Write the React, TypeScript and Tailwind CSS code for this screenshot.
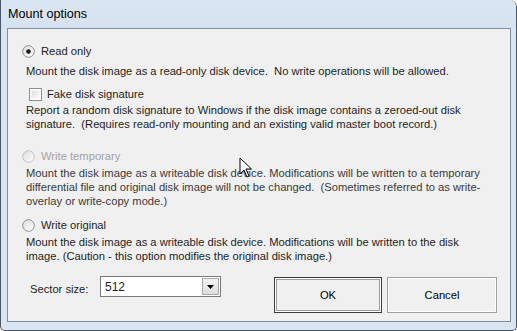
import React from 'react';

function Radio({ checked, disabled }: { checked?: boolean; disabled?: boolean }) {
  return (
    <svg width="13" height="13" viewBox="0 0 13 13" className="shrink-0">
      <defs>
        <linearGradient id="rg" x1="0" y1="0" x2="1" y2="1">
          <stop offset="0" stopColor="#dcdcdc" />
          <stop offset="1" stopColor="#ffffff" />
        </linearGradient>
      </defs>
      <circle cx="6.5" cy="6.5" r="5.8" fill="url(#rg)" stroke={disabled ? '#c4c4c4' : '#8e8f8f'} strokeWidth="1" />
      {checked && <circle cx="6.5" cy="6.5" r="2.3" fill="#1a1a1a" />}
    </svg>
  );
}

function Checkbox() {
  return (
    <svg width="13" height="13" viewBox="0 0 13 13" className="shrink-0">
      <defs>
        <linearGradient id="cg" x1="0" y1="0" x2="1" y2="1">
          <stop offset="0" stopColor="#dedede" />
          <stop offset="1" stopColor="#fbfbfb" />
        </linearGradient>
      </defs>
      <rect x="0.5" y="0.5" width="12" height="12" fill="#ffffff" stroke="#8e8f8f" />
      <rect x="2.5" y="2.5" width="8" height="8" fill="url(#cg)" />
    </svg>
  );
}

export default function App() {
  return (
    <div
      className="relative w-[517px] h-[331px] overflow-hidden bg-[#dae5f2] border-x border-b border-[#4a5566] rounded-tr-[7px] rounded-b-[5px] text-[11.2px] text-[#1e1e1e] whitespace-nowrap"
      style={{ fontFamily: '"Liberation Sans", Arial, sans-serif' }}
    >
      {/* Title bar */}
      <div className="h-[28px] pl-[7px] pt-[7px] text-[12.6px] leading-[15px] text-black bg-gradient-to-b from-[#dbe6f3] to-[#d6e2f0]">
        Mount options
      </div>

      {/* Client area */}
      <div className="ml-[6px] mr-[5px] h-[294px] border border-[#7f8ea3] bg-[#f0f0f0] pl-[14px] pt-[14px]">
        <div className="flex items-center gap-[6px] h-[16px]">
          <Radio checked />
          <span>Read only</span>
        </div>
        <div className="ml-[4px] mt-[5px] leading-[14px]">
          Mount the disk image as a read-only disk device.&nbsp; No write operations will be allowed.
        </div>
        <div className="ml-[7px] mt-[8px] flex items-center gap-[5px] h-[16px]">
          <Checkbox />
          <span>Fake disk signature</span>
        </div>
        <div className="ml-[4px] mt-[1px] leading-[14px]">
          Report a random disk signature to Windows if the disk image contains a zeroed-out disk
          <br />
          signature.&nbsp; (Requires read-only mounting and an existing valid master boot record.)
        </div>

        <div className="mt-[17px] flex items-center gap-[6px] h-[16px] text-[#a3a3a3]">
          <Radio disabled />
          <span>Write temporary</span>
        </div>
        <div className="ml-[4px] mt-[2px] leading-[14px] text-[#3a3a3a]">
          Mount the disk image as a writeable disk device. Modifications will be written to a temporary
          <br />
          differential file and original disk image will not be changed.&nbsp; (Sometimes referred to as write-
          <br />
          overlay or write-copy mode.)
        </div>

        <div className="mt-[9px] flex items-center gap-[6px] h-[16px]">
          <Radio />
          <span>Write original</span>
        </div>
        <div className="ml-[4px] mt-[2px] leading-[14px]">
          Mount the disk image as a writeable disk device. Modifications will be written to the disk
          <br />
          image. (Caution - this option modifies the original disk image.)
        </div>

        <div className="mt-[12px] flex items-start">
          <span className="ml-[8px] w-[70px] pt-[6px]">Sector size:</span>
          <div className="mt-[1px] flex items-center w-[121px] h-[21px] border border-[#7a7a7a] bg-white">
            <span className="flex-1 pl-[4px] text-[12px]">512</span>
            <div className="mr-[1px] w-[17px] h-[17px] border border-[#a8a8a8] bg-gradient-to-b from-[#f4f4f4] to-[#dcdcdc] flex items-center justify-center">
              <svg width="7" height="4" viewBox="0 0 7 4">
                <path d="M0 0 L7 0 L3.5 4 Z" fill="#000" />
              </svg>
            </div>
          </div>
          <div className="ml-auto mr-[13px] mt-[2px] flex gap-[5px]">
            <button className="w-[108px] h-[36px] border border-[#3c3c3c] bg-[#f0f0f0] shadow-[inset_0_0_0_1px_#ffffff,inset_0_0_0_2px_#a0a0a0] text-black">
              OK
            </button>
            <button className="w-[110px] h-[36px] border border-[#a0a0a0] bg-[#f0f0f0] shadow-[inset_0_0_0_1px_#ffffff] text-black">
              Cancel
            </button>
          </div>
        </div>
      </div>

      {/* Mouse cursor */}
      <svg className="absolute left-[238px] top-[157px]" width="14" height="22" viewBox="0 0 14 22">
        <path d="M1 1 L1 17 L5 13 L8 20 L10 19 L7 12 L12.5 12 Z" fill="#ffffff" stroke="#000" strokeWidth="1" strokeLinejoin="miter" />
      </svg>
    </div>
  );
}
